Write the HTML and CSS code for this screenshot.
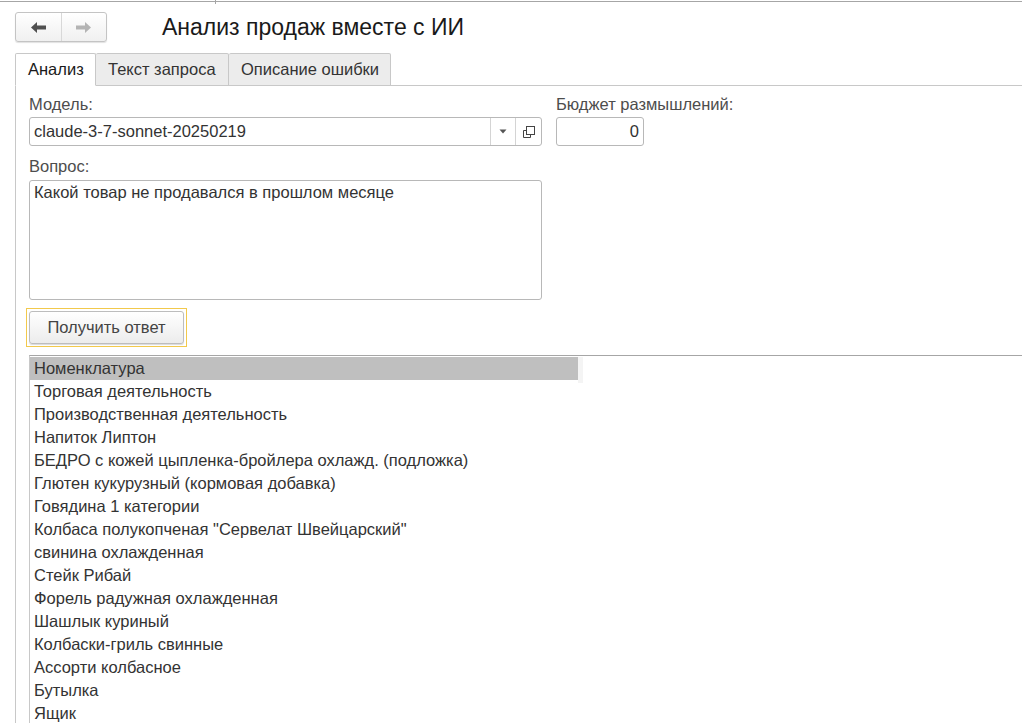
FILE: index.html
```html
<!DOCTYPE html>
<html lang="ru">
<head>
  <meta charset="UTF-8" />
  <title>Анализ продаж вместе с ИИ</title>
  <link rel="stylesheet" href="styles.css">
</head>
<body>
  <div class="topline"></div>

  <div class="header">
    <div class="nav">
      <button class="nav-btn">
        <svg width="15" height="11" viewBox="0 0 15 11"><path d="M0 5.5 L6 0 V3.5 H15 V7.5 H6 V11 Z" fill="#505050"/></svg>
      </button>
      <button class="nav-btn">
        <svg width="15" height="11" viewBox="0 0 15 11"><path d="M15 5.5 L9 0 V3.5 H0 V7.5 H9 V11 Z" fill="#b4b4b4"/></svg>
      </button>
    </div>
    <h1 class="title">Анализ продаж вместе с ИИ</h1>
  </div>

  <div class="tabs">
    <div class="tab active">Анализ</div>
    <div class="tab">Текст запроса</div>
    <div class="tab">Описание ошибки</div>
    <div class="tabs-fill"></div>
  </div>

  <div class="panel">
    <div class="row">
      <div class="col-main">
        <div class="label">Модель:</div>
        <div class="combo">
          <div class="combo-text">claude-3-7-sonnet-20250219</div>
          <div class="combo-btn">
            <svg width="8" height="5" viewBox="0 0 8 5"><path d="M0.5 0.5 H7.5 L4 4.5 Z" fill="#555"/></svg>
          </div>
          <div class="combo-btn">
            <svg width="14" height="14" viewBox="0 0 14 14" fill="none" stroke="#444" stroke-width="1">
              <rect x="4.5" y="1.5" width="8" height="8" fill="#fff"/>
              <path d="M4.5 5.5 H1.5 V12.5 H8.5 V9.5"/>
            </svg>
          </div>
        </div>

        <div class="label label-gap">Вопрос:</div>
        <div class="textarea">Какой товар не продавался в прошлом месяце</div>

        <div class="focus-ring">
          <button class="btn">Получить ответ</button>
        </div>
      </div>

      <div class="col-side">
        <div class="label">Бюджет размышлений:</div>
        <div class="number">0</div>
      </div>
    </div>

    <div class="list">
      <div class="list-col">
        <div class="list-row selected">Номенклатура</div>
        <div class="list-row">Торговая деятельность</div>
        <div class="list-row">Производственная деятельность</div>
        <div class="list-row">Напиток Липтон</div>
        <div class="list-row">БЕДРО с кожей цыпленка-бройлера охлажд. (подложка)</div>
        <div class="list-row">Глютен кукурузный (кормовая добавка)</div>
        <div class="list-row">Говядина 1 категории</div>
        <div class="list-row">Колбаса полукопченая "Сервелат Швейцарский"</div>
        <div class="list-row">свинина охлажденная</div>
        <div class="list-row">Стейк Рибай</div>
        <div class="list-row">Форель радужная охлажденная</div>
        <div class="list-row">Шашлык куриный</div>
        <div class="list-row">Колбаски-гриль свинные</div>
        <div class="list-row">Ассорти колбасное</div>
        <div class="list-row">Бутылка</div>
        <div class="list-row">Ящик</div>
      </div>
      <div class="list-edge"></div>
    </div>
  </div>
</body>
</html>
```

FILE: styles.css
```css
* {
  margin: 0;
  padding: 0;
  box-sizing: border-box;
}

html, body {
  height: 100%;
  overflow: hidden;
}

body {
  font-family: 'Liberation Sans', Arial, sans-serif;
  font-size: 16.5px;
  color: #333;
  background: #fff;
}

.topline {
  position: relative;
  height: 1px;
  margin-top: 1px;
  background: #a6a6a6;
}

.topline::after {
  content: "";
  position: absolute;
  left: 215px;
  top: -1px;
  width: 1px;
  height: 4px;
  background: #a6a6a6;
}

.header {
  display: flex;
  align-items: center;
  padding-left: 15px;
  margin-top: 10px;
}

.nav {
  display: flex;
  width: 92px;
  height: 30px;
  border: 1px solid #c4c4c4;
  border-radius: 3px;
  background: linear-gradient(#ffffff, #f0f0f0);
  box-shadow: 0 1px 1px rgba(0, 0, 0, 0.12);
}

.nav-btn {
  flex: 1;
  display: flex;
  align-items: center;
  justify-content: center;
  border: none;
  background: none;
}

.nav-btn + .nav-btn {
  border-left: 1px solid #d8d8d8;
}

.title {
  margin-left: 55px;
  font-size: 23px;
  font-weight: normal;
  color: #1a1a1a;
}

.tabs {
  display: flex;
  margin-top: 11px;
  padding-left: 15px;
  height: 33px;
}

.tab {
  display: flex;
  align-items: center;
  padding: 0 12px;
  background: #ececec;
  border: 1px solid #c8c8c8;
  border-left: none;
  border-radius: 2px 2px 0 0;
  color: #333;
  white-space: nowrap;
}

.tab.active {
  width: 81px;
  background: #fff;
  border-left: 1px solid #c8c8c8;
  border-bottom-color: #fff;
  color: #1a1a1a;
}

.tab:nth-child(2) {
  width: 133px;
}

.tab:nth-child(3) {
  width: 162px;
}

.tabs-fill {
  flex: 1;
  border-bottom: 1px solid #c8c8c8;
}

.panel {
  margin-left: 15px;
  border-left: 1px solid #c8c8c8;
  padding-left: 13px;
  padding-top: 8px;
  height: 100%;
}

.row {
  display: flex;
  gap: 14px;
}

.col-main {
  width: 513px;
}

.col-side {
  width: 88px;
}

.label {
  height: 20px;
  line-height: 20px;
  color: #4d4d4d;
  margin-bottom: 3px;
  white-space: nowrap;
}

.label-gap {
  margin-top: 10px;
  margin-bottom: 4px;
}

.combo {
  display: flex;
  height: 29px;
  border: 1px solid #b8b8b8;
  border-radius: 3px;
}

.combo-text {
  flex: 1;
  padding-left: 4px;
  line-height: 27px;
  color: #333;
}

.combo-btn {
  width: 25px;
  display: flex;
  align-items: center;
  justify-content: center;
  border-left: 1px solid #d4d4d4;
}

.combo-btn:last-child {
  width: 26px;
}

.number {
  height: 29px;
  border: 1px solid #b8b8b8;
  border-radius: 3px;
  line-height: 27px;
  text-align: right;
  padding-right: 4px;
  color: #333;
}

.textarea {
  height: 120px;
  border: 1px solid #b8b8b8;
  border-radius: 3px;
  padding: 2px 4px;
  color: #333;
}

.focus-ring {
  display: inline-block;
  margin-top: 8px;
  margin-left: -3px;
  padding: 2px;
  border: 1px solid #f2c94c;
}

.btn {
  display: block;
  width: 155px;
  height: 33px;
  border: 1px solid #bdbdbd;
  border-radius: 3px;
  background: linear-gradient(#ffffff, #ececec);
  box-shadow: 0 1px 1px rgba(0, 0, 0, 0.15);
  font-family: inherit;
  font-size: 16.5px;
  color: #444;
}

.list {
  display: flex;
  margin-top: 8px;
  border-top: 1px solid #a6a6a6;
  border-left: 1px solid #c8c8c8;
  padding-top: 1px;
}

.list-col {
  width: 548px;
}

.list-edge {
  width: 5px;
  height: 26px;
  background: #f4f4f4;
}

.list-row {
  height: 23px;
  line-height: 23px;
  padding-left: 4px;
  color: #333;
  white-space: nowrap;
}

.list-row.selected {
  background: #bfbfbf;
}
```
